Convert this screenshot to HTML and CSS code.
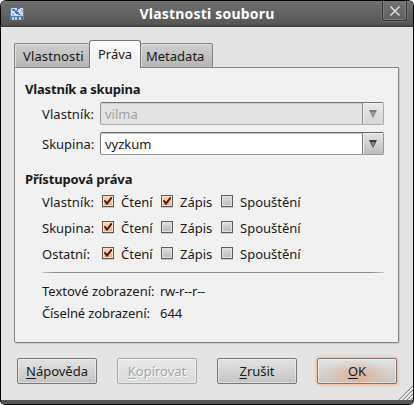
FILE: index.html
```
<!DOCTYPE html>
<html lang="cs">
<head>
<meta charset="utf-8">
<title>Vlastnosti souboru</title>
<link rel="stylesheet" href="styles.css">
</head>
<body>
<div class="window">
  <header class="titlebar">
    <svg class="app-icon" width="14" height="14" viewBox="0 0 14 14" shape-rendering="crispEdges">
      <path d="M0 1h2v12H0zM12 1h2v12h-2z" fill="#5f83ad"/>
      <path d="M1 1h12v9H1z" fill="#d3dfed"/>
      <path d="M1 1h2v3H1zM11 2h2v3h-2zM2 6h2v3H2zM10 7h2v2h-2z" fill="#a9bfd9"/>
      <path d="M1 9h12v4H1z" fill="#587fac"/>
      <path d="M2 10h2v3H2zM5 10h2v3H5zM9 10h2v3H9z" fill="#c9cbc9"/>
      <path d="M3 2h2v1h2V1h3v1H8v2H7v1h2v2h1v1H8V7H6V6H5V4H3z" fill="#2c66dd"/>
      <path d="M5 3h2v1H5zM8 6h2v1H8z" fill="#82b0f5"/>
    </svg>
    <h1>Vlastnosti souboru</h1>
    <button class="close"><svg width="12" height="12" viewBox="0 0 12 12"><path d="M1.5 1.5l9 9M10.5 1.5l-9 9" stroke="#deded9" stroke-width="1.5"/></svg></button>
  </header>
  <main class="content">
    <nav class="tabs">
      <div class="tab first">Vlastnosti</div>
      <div class="tab active">Práva</div>
      <div class="tab last">Metadata</div>
    </nav>
    <section class="panel">
      <h2 class="owner-title">Vlastník a skupina</h2>
      <div class="field disabled"><label class="vl">Vlastník:</label><div class="combo"><span>vilma</span><i><svg width="8" height="8" viewBox="0 0 8 8"><path d="M0 0h8L4 8z" fill="#7c7c7c"/><path d="M2 2h4L4 7z" fill="#a0a0a0"/></svg></i></div></div>
      <div class="field"><label>Skupina:</label><div class="combo"><span>vyzkum</span><i><svg width="8" height="8" viewBox="0 0 8 8"><path d="M0 0h8L4 8z" fill="#3c3c3c"/><path d="M2 2h4L4 7z" fill="#858585"/></svg></i></div></div>
      <h2 class="rights-title">Přístupová práva</h2>
      <div class="rights">
        <span class="vl">Vlastník:</span><b class="check on"></b><span>Čtení</span><b class="check on"></b><span>Zápis</span><b class="check"></b><span>Spouštění</span>
        <span>Skupina:</span><b class="check on"></b><span>Čtení</span><b class="check"></b><span>Zápis</span><b class="check"></b><span>Spouštění</span>
        <span>Ostatní:</span><b class="check on"></b><span>Čtení</span><b class="check"></b><span>Zápis</span><b class="check"></b><span>Spouštění</span>
      </div>
      <div class="rule"></div>
      <div class="summary">
        <span>Textové zobrazení:</span><span class="mode">rw-r--r--</span>
        <span class="num">Číselné zobrazení:</span><span>644</span>
      </div>
    </section>
    <footer class="actions">
      <button class="btn"><u>N</u>ápověda</button>
      <button class="btn off"><u>K</u>opírovat</button>
      <button class="btn"><u>Z</u>rušit</button>
      <button class="btn default"><u>O</u>K</button>
    </footer>
  </main>
  <svg class="grip" width="15" height="15" viewBox="0 0 15 15"><path d="M1 15L15 1M5 15L15 5M9 15l6-6M13 15l2-2" stroke="#8c8c8c" stroke-width="1.1"/><path d="M2.4 15L15 2.4M6.4 15L15 6.4M10.4 15l4.6-4.6" stroke="#fff"/></svg>
</div>
</body>
</html>
```
FILE: styles.css
```
* { box-sizing: border-box; }
html { background: #fff; }
body { margin: 0; font: 13px/18px "Noto Sans", "Open Sans", sans-serif; color: #1a1a1a; }
h1, h2 { margin: 0; }
button { font: inherit; color: inherit; padding: 0; }

.window {
  position: relative;
  width: 414px;
  height: 405px;
  border: 1px solid #000;
  border-bottom: 0;
  border-radius: 6px 6px 5px 5px;
  background: linear-gradient(#555 0 4px, #000 4px) bottom / 100% 5px no-repeat #e4e4e4;
  overflow: hidden;
}

.titlebar {
  display: grid;
  grid-template-columns: 32px 1fr 32px;
  height: 26px;
  background: linear-gradient(#777 0, #6d6d6d 2px, #565656 24px, #3a3a3a 25px);
}
.app-icon { margin: 6px 0 0 9px; }
.titlebar h1 {
  font-size: 14px;
  line-height: 25px;
  letter-spacing: .2px;
  text-align: center;
  color: #fff;
}
.close {
  width: 25px;
  height: 21px;
  margin: -1px 0 0 1px;
  border: 1px solid #333;
  border-top: 0;
  border-radius: 0 0 3px 3px;
  background: linear-gradient(#747474, #616161);
  box-shadow: inset 0 0 0 1px #808080, 0 0 0 1px #707070;
}
.close svg { display: block; margin: 2px auto 0; }

.content { padding: 13px 14px 0 13px; }
.tabs { position: relative; z-index: 1; display: flex; align-items: flex-end; height: 28px; }
.tab {
  height: 25px;
  padding: 3px 0 0 9px;
  border: 1px solid #858585;
  border-radius: 2px 2px 0 0;
  background: linear-gradient(#cfcfcf, #b5b5b5);
  box-shadow: inset 1px 1px #dcdcdc;
}
.tab.first { width: 75px; border-right: 0; letter-spacing: .12px; padding-left: 8px; }
.tab.active {
  width: 52px;
  height: 28px;
  padding: 4px 0 0 8px;
  border-color: #777;
  border-bottom: 0;
  border-radius: 3px 3px 0 0;
  background: linear-gradient(#fff, #f1f1f1 18px);
  box-shadow: none;
}
.tab.last { width: 72px; border-left: 0; padding-left: 5px; }

.panel {
  height: 276px;
  margin-top: -1px;
  padding: 12px 14px 0 27px;
  border: 1px solid #858585;
  border-radius: 0 0 2px 2px;
  background: #f1f1f1;
  box-shadow: 1px 1px #c9c9c9;
}
.panel h2 { font-size: 13px; line-height: 18px; margin-left: -17px; }
.owner-title { letter-spacing: -.18px; }
.rights-title { margin-top: 15px; letter-spacing: -.16px; }
.vl { letter-spacing: .1px; }

.field { display: grid; grid-template-columns: 58px 1fr; height: 23px; margin-top: 7px; }
.owner-title + .field { margin-top: 4px; }
.field label { padding-top: 3px; }
.combo {
  display: grid;
  grid-template-columns: 1fr 21px;
  border: 1px solid #999;
  border-top-color: #666;
  border-left-color: #777;
  border-radius: 2px;
  background: #fff;
  box-shadow: inset 0 1px #c8c8c8;
}
.combo span { padding: 2px 0 0 4px; }
.combo i {
  display: grid;
  place-items: center;
  border-left: 1px solid #777;
  background: linear-gradient(#e4e4e4, #bcbcbc);
  box-shadow: inset 1px 1px #eee;
}
.disabled .combo { background: #e3e3e3; color: #a2a2a2; border-color: #777 #aaa #aaa #999; }
.disabled .combo i { background: linear-gradient(#e8e8e8, #d6d6d6); border-color: #8b8b8b; }

.rights {
  display: grid;
  grid-template-columns: 60px 19px 40px 19px 41px 19px 1fr;
  grid-auto-rows: 26px;
  align-items: start;
  margin-top: 5px;
}
/* The third column of boxes sits one pixel further right than the grid step. */
.check {
  width: 12px;
  height: 12px;
  margin-top: 2px;
  border: 1px solid #5c5c5c;
  background: linear-gradient(#dedede, #b9b9b9);
  box-shadow: inset 0 0 0 1px #e2e2e2, 0 1px #c8c8c8;
}
.check.on {
  background: url('data:image/svg+xml,<svg xmlns="http://www.w3.org/2000/svg" viewBox="0 0 10 10"><path d="M1.5 4.2L4 7.6 8.8 1.4" fill="none" stroke="%23481c10" stroke-width="1.9"/></svg>') center / 10px 10px no-repeat, linear-gradient(#f8dbb8, #f8a77c);
  box-shadow: inset 0 0 0 1px #fbdcc5, 0 1px #c8c8c8;
}
.rule { height: 1px; margin-top: 1px; background: linear-gradient(90deg, #ccc, #8b8b8b 12px calc(100% - 12px), #ccc); }

.summary {
  display: grid;
  grid-template-columns: 118px 1fr;
  row-gap: 4px;
  margin-top: 9px;
}
.mode { letter-spacing: -.25px; }
.num { letter-spacing: -.12px; }

.actions { display: flex; gap: 20px; margin: 15px 0 0 3px; }
.btn {
  width: 80px;
  height: 26px;
  border: 1px solid #777;
  border-radius: 2px;
  background: linear-gradient(#e2e2e2, #c4c4c4);
  box-shadow: inset 0 0 0 1px rgba(255, 255, 255, .4);
}
.btn u { text-underline-offset: 2px; text-decoration-thickness: 1px; }
.btn.off {
  border-color: #a8a8a8;
  background: linear-gradient(#e9e9e9, #d9d9d9);
  color: #a5a5a5;
  text-shadow: 1px 1px #fff;
}
.btn.default {
  background: radial-gradient(ellipse at 50% 75%, #deb395, transparent 68%), linear-gradient(#e2e2e2, #c8c8c8);
  box-shadow: inset 0 0 0 1px rgba(255, 255, 255, .4), 0 0 3px 1px #f4b58c;
}
.grip { position: absolute; right: 0; bottom: 5px; }
```
